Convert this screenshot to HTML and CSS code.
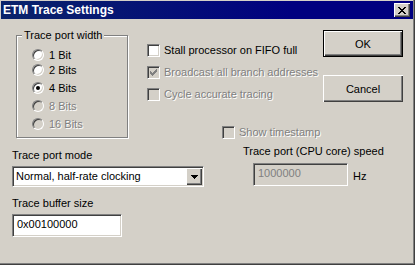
FILE: index.html
```html
<!DOCTYPE html>
<html lang="en">
<head>
    <meta charset="UTF-8">
    <title>ETM Trace Settings</title>
    <link rel="stylesheet" href="styles.css">
</head>
<body>
    <div class="window">
        <!-- Caption -->
        <div class="titlebar">
            <span class="title">ETM Trace Settings</span>
            <span class="close-btn">
                <svg width="8" height="7" viewBox="0 0 8 7" shape-rendering="crispEdges"><path d="M0 0h2v1h-2z M6 0h2v1h-2z M1 1h2v1h-2z M5 1h2v1h-2z M2 2h4v1h-4z M3 3h2v1h-2z M2 4h4v1h-4z M1 5h2v1h-2z M5 5h2v1h-2z M0 6h2v1h-2z M6 6h2v1h-2z" fill="#000"/></svg>
            </span>
        </div>

        <div class="client">
            <div class="top">
                <div class="groupbox">
                    <span class="legend">Trace port width</span>
                    <div class="radio first"><span class="radio-mark"></span>1 Bit</div>
                    <div class="radio"><span class="radio-mark"></span>2 Bits</div>
                    <div class="radio"><span class="radio-mark checked"></span>4 Bits</div>
                    <div class="radio disabled"><span class="radio-mark"></span>8 Bits</div>
                    <div class="radio disabled"><span class="radio-mark"></span>16 Bits</div>
                </div>

                <div class="options">
                    <div class="check"><span class="box"></span>Stall processor on FIFO full</div>
                    <div class="check disabled">
                        <span class="box">
                            <svg width="9" height="9" viewBox="0 0 9 9" shape-rendering="crispEdges"><path d="M1 3h1v3h-1z M2 4h1v3h-1z M3 5h1v3h-1z M4 4h1v3h-1z M5 3h1v3h-1z M6 2h1v3h-1z M7 1h1v3h-1z" fill="#808080"/></svg>
                        </span>Broadcast all branch addresses
                    </div>
                    <div class="check disabled"><span class="box"></span>Cycle accurate tracing</div>
                    <div class="check disabled timestamp"><span class="box"></span>Show timestamp</div>
                </div>

                <div class="buttons">
                    <div class="btn default">OK</div>
                    <div class="btn">Cancel</div>
                </div>
            </div>

            <div class="bottom">
                <div class="fields">
                    <div class="label first">Trace port mode</div>
                    <div class="combo">
                        <span class="combo-text">Normal, half-rate clocking</span>
                        <span class="combo-arrow">
                            <svg width="7" height="4" viewBox="0 0 7 4" shape-rendering="crispEdges"><path d="M0 0h7v1h-7z M1 1h5v1h-5z M2 2h3v1h-3z M3 3h1v1h-1z" fill="#000"/></svg>
                        </span>
                    </div>
                    <div class="label">Trace buffer size</div>
                    <div class="edit buffer">0x00100000</div>
                </div>

                <div class="speed">
                    <div class="label">Trace port (CPU core) speed</div>
                    <div class="speed-row">
                        <div class="edit readonly">1000000</div>
                        <span class="unit">Hz</span>
                    </div>
                </div>
            </div>
        </div>
    </div>
</body>
</html>
```

FILE: styles.css
```css
:root {
    --face: #d4d0c8;
    --shadow: #808080;
    --dark: #404040;
    --light: #ffffff;
}

body {
    margin: 0;
    background: var(--face);
    font-family: 'Liberation Sans', Arial, sans-serif;
    font-size: 11px;
    color: #000;
}

/* Window frame */
.window {
    width: 415px;
    height: 265px;
    box-sizing: border-box;
    padding: 1px;
    border-right: 1px solid var(--dark);
    border-bottom: 1px solid var(--dark);
    box-shadow: inset -1px -1px var(--shadow);
    background: var(--face);
}

.titlebar {
    height: 18px;
    display: flex;
    align-items: center;
    justify-content: space-between;
    padding: 0 3px 0 2px;
    background: linear-gradient(to right, #0a246a, #000080 70%);
}

.title {
    color: #fff;
    font-weight: bold;
    font-size: 12px;
    line-height: 18px;
}

.close-btn {
    width: 16px;
    height: 14px;
    box-sizing: border-box;
    display: flex;
    align-items: center;
    justify-content: center;
    background: var(--face);
    box-shadow: inset 1px 1px var(--light), inset -1px -1px var(--dark), inset -2px -2px var(--shadow);
}

.client {
    padding-left: 11px;
}

.top {
    display: flex;
    align-items: flex-start;
    height: 121px;
}

/* Group box */
.groupbox {
    position: relative;
    width: 112px;
    height: 103px;
    box-sizing: border-box;
    margin: 16px 0 0 4px;
    padding: 13px 0 0 15px;
    border: 1px solid var(--shadow);
    box-shadow: inset 1px 1px var(--light), 1px 1px var(--light);
}

.legend {
    position: absolute;
    top: -7px;
    left: 5px;
    padding: 0 2px;
    background: var(--face);
    line-height: 13px;
}

.radio {
    display: flex;
    align-items: center;
    gap: 5px;
    height: 12px;
    line-height: 13px;
}

.radio + .radio {
    margin-top: 6px;
}

.radio.first {
    margin-bottom: -3px;
}

.radio-mark {
    position: relative;
    width: 12px;
    height: 12px;
    box-sizing: border-box;
    border-radius: 50%;
    border: 1px solid;
    border-color: var(--shadow) var(--light) var(--light) var(--shadow);
    box-shadow: inset 1px 1px var(--dark), inset -1px -1px var(--face);
    background: #fff;
}

.radio-mark.checked::after {
    content: "";
    position: absolute;
    left: 3px;
    top: 3px;
    width: 4px;
    height: 4px;
    border-radius: 50%;
    background: #000;
}

.disabled {
    color: var(--shadow);
    text-shadow: 1px 1px 0 var(--light);
}

.disabled .radio-mark,
.disabled .box {
    background: var(--face);
}

/* Check boxes */
.options {
    margin: 25px 0 0 19px;
}

.check {
    display: flex;
    align-items: center;
    gap: 4px;
    height: 13px;
    line-height: 13px;
    white-space: nowrap;
}

.check + .check {
    margin-top: 9px;
}

.check.timestamp {
    margin: 25px 0 0 75px;
}

.box {
    width: 13px;
    height: 13px;
    box-sizing: border-box;
    padding: 1px;
    border: 1px solid;
    border-color: var(--shadow) var(--light) var(--light) var(--shadow);
    box-shadow: inset 1px 1px var(--dark), inset -1px -1px var(--face);
    background: #fff;
}

.box svg {
    display: block;
}

/* Push buttons */
.buttons {
    margin: 11px 10px 0 auto;
    display: flex;
    flex-direction: column;
    gap: 18px;
}

.btn {
    width: 80px;
    height: 27px;
    box-sizing: border-box;
    display: flex;
    align-items: center;
    justify-content: center;
    background: var(--face);
    box-shadow: inset 1px 1px var(--light), inset -1px -1px var(--dark), inset -2px -2px var(--shadow);
}

.btn.default {
    border: 1px solid #000;
}

/* Lower fields */
.bottom {
    display: flex;
    align-items: flex-start;
}

.fields {
    width: 192px;
}

.label {
    line-height: 13px;
    margin-top: 10px;
    white-space: nowrap;
}

.label.first {
    margin-top: 9px;
}

.combo,
.edit {
    box-sizing: border-box;
    border: 1px solid;
    border-color: var(--shadow) var(--light) var(--light) var(--shadow);
    box-shadow: inset 1px 1px var(--dark), inset -1px -1px var(--face);
    background: #fff;
}

.combo {
    margin-top: 4px;
    height: 21px;
    padding: 1px;
    display: flex;
}

.combo-text {
    flex: 1;
    padding-left: 2px;
    line-height: 17px;
}

.combo-arrow {
    width: 16px;
    height: 17px;
    box-sizing: border-box;
    display: flex;
    align-items: center;
    justify-content: center;
    background: var(--face);
    box-shadow: inset 1px 1px var(--light), inset -1px -1px var(--dark), inset -2px -2px var(--shadow);
}

.edit {
    height: 23px;
    padding: 1px 0 0 4px;
    line-height: 17px;
}

.edit.buffer {
    margin-top: 4px;
    width: 110px;
}

.speed {
    margin: 5px 0 0 39px;
}

.speed .label {
    margin-top: 0;
}

.speed-row {
    display: flex;
    align-items: center;
    gap: 5px;
    margin: 5px 0 0 10px;
}

.edit.readonly {
    width: 95px;
    background: var(--face);
    color: var(--shadow);
}

.unit {
    margin-top: 3px;
}
```
